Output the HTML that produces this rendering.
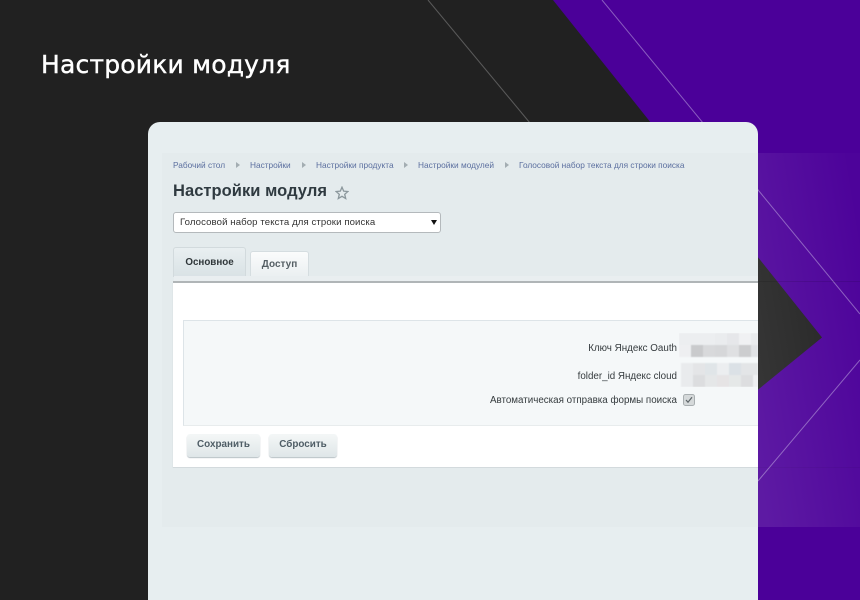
<!DOCTYPE html>
<html>
<head>
<meta charset="utf-8">
<style>
html,body{margin:0;padding:0}
body{width:860px;height:600px;overflow:hidden;position:relative;background:#212121;font-family:"Liberation Sans",sans-serif}
.a{position:absolute;white-space:nowrap}
.bc{font-size:8.3px;color:#5b6f9f;top:160px;line-height:11px}
.ar{position:absolute;top:162px;width:0;height:0;border-left:4px solid #a3adb2;border-top:3px solid transparent;border-bottom:3px solid transparent}
.lb{font-size:9.8px;color:#353b3e;right:183px;line-height:13px}
.btn{position:absolute;top:434px;height:23px;border-radius:3px;background:linear-gradient(#f4f7f7,#dfe6e8);box-shadow:0 1px 1px #b5bfc3;font-size:9.9px;font-weight:bold;color:#4f5d66;text-align:center;line-height:22px}
</style>
</head>
<body>
<svg class="a" style="left:0;top:0" width="860" height="600" viewBox="0 0 860 600">
  <polygon points="553,0 860,0 860,600 500,600 822,337.5" fill="#4b0099"/>
  <line x1="428" y1="0" x2="530" y2="123" stroke="#5a5a5a" stroke-width="1"/>
  <line x1="602" y1="0" x2="860" y2="314" stroke="#8a5cc0" stroke-width="1"/>
  <line x1="758" y1="481" x2="860" y2="360" stroke="#8a5cc0" stroke-width="1"/>
  <defs>
    <linearGradient id="g" x1="0" x2="1" y1=".8" y2=".2">
      <stop offset="0" stop-color="#fff" stop-opacity=".1"/>
      <stop offset="1" stop-color="#fff" stop-opacity=".012"/>
    </linearGradient>
  </defs>
  <rect x="758" y="153" width="102" height="374" fill="url(#g)"/>
  <rect x="758" y="281" width="102" height="1" fill="#000" opacity=".1"/>
  <rect x="758" y="467" width="102" height="1" fill="#000" opacity=".04"/>
</svg>

<div class="a" style="left:41px;top:49px;font-family:'DejaVu Sans',sans-serif;font-size:25px;font-weight:normal;color:#fff;line-height:32px;letter-spacing:.2px;-webkit-text-stroke:.4px #fff">Настройки модуля</div>

<div class="a" style="left:148px;top:122px;width:610px;height:478px;background:#e7eef0;border-radius:12px 12px 0 0;overflow:hidden">
  <div class="a" style="left:14px;top:31px;width:596px;height:374px;background:#e4ebed"></div>
</div>

<div class="a bc" style="left:173px">Рабочий стол</div><div class="ar" style="left:236px"></div>
<div class="a bc" style="left:250px">Настройки</div><div class="ar" style="left:302px"></div>
<div class="a bc" style="left:316px">Настройки продукта</div><div class="ar" style="left:404px"></div>
<div class="a bc" style="left:418px">Настройки модулей</div><div class="ar" style="left:505px"></div>
<div class="a bc" style="left:519px">Голосовой набор текста для строки поиска</div>

<div class="a" style="left:173px;top:181px;font-size:16.5px;font-weight:bold;color:#2f3a40;line-height:20px;letter-spacing:.05px">Настройки модуля</div>
<svg class="a" style="left:335px;top:186px" width="14" height="14" viewBox="0 0 14 14"><path d="M7 1.2 L8.7 5.1 L12.9 5.5 L9.7 8.3 L10.7 12.5 L7 10.3 L3.3 12.5 L4.3 8.3 L1.1 5.5 L5.3 5.1 Z" fill="none" stroke="#8b979c" stroke-width="1.3"/></svg>

<div class="a" style="left:173px;top:212px;width:266px;height:19px;background:#fff;border:1px solid #b4b9bc;border-radius:3px;font-size:9.6px;line-height:20px;color:#333;text-indent:6px;letter-spacing:.1px">Голосовой набор текста для строки поиска</div>
<div class="a" style="left:431px;top:220px;width:0;height:0;border-top:5px solid #111;border-left:3px solid transparent;border-right:3px solid transparent"></div>

<div class="a" style="left:173px;top:247px;width:71px;height:29px;background:linear-gradient(#e9eff1,#d9e2e5);border:1px solid #d2dadd;border-bottom:0;border-radius:3px 3px 0 0;font-size:9.8px;font-weight:bold;color:#2f3639;text-align:center;line-height:30px">Основное</div>
<div class="a" style="left:250px;top:251px;width:57px;height:25px;background:linear-gradient(#fbfcfc,#eaeff1);border:1px solid #d5dde0;border-bottom:0;border-radius:3px 3px 0 0;font-size:10px;font-weight:bold;color:#555f64;text-align:center;line-height:25px">Доступ</div>
<div class="a" style="left:174px;top:276px;width:584px;height:5px;background:#e9eef0"></div>
<div class="a" style="left:173px;top:281px;width:585px;height:2px;background:#b0b5b7"></div>

<div class="a" style="left:173px;top:283px;width:585px;height:184px;background:#fff;border-bottom:1px solid #d3dadd;box-shadow:-1px 0 0 #dfe6e8"></div>
<div class="a" style="left:183px;top:320px;width:574px;height:104px;background:#f5f8f9;border:1px solid #dde4e8;border-right:0;border-bottom-color:#e8eced"></div>

<div class="a lb" style="top:342px">Ключ Яндекс Oauth</div>
<div class="a lb" style="top:370px">folder_id Яндекс cloud</div>
<div class="a lb" style="top:394px">Автоматическая отправка формы поиска</div>

<svg class="a" style="left:679px;top:333px" width="79" height="54" viewBox="0 0 79 54">
  <g style="filter:blur(.6px)">
    <rect x="0" y="0" width="79" height="24" fill="#eceef0"/>
    <rect x="0" y="12" width="12" height="12" fill="#eeeff1"/>
    <rect x="12" y="12" width="12" height="12" fill="#c9cacc"/>
    <rect x="24" y="12" width="12" height="12" fill="#d8d9db"/>
    <rect x="36" y="12" width="12" height="12" fill="#d6d7d9"/>
    <rect x="48" y="12" width="12" height="12" fill="#dfe0e2"/>
    <rect x="60" y="12" width="12" height="12" fill="#cccdcf"/>
    <rect x="72" y="12" width="7" height="12" fill="#e0e2e5"/>
    <rect x="36" y="0" width="12" height="12" fill="#eaecee"/>
    <rect x="48" y="0" width="12" height="12" fill="#e6e7ea"/>
    <rect x="60" y="0" width="12" height="12" fill="#f0f1f3"/>
    <rect x="72" y="0" width="7" height="12" fill="#e9ebed"/>
    <rect x="2" y="30" width="77" height="24" fill="#e9ebed"/>
    <rect x="14" y="30" width="12" height="12" fill="#e4e5e7"/>
    <rect x="26" y="30" width="12" height="12" fill="#e0e5e8"/>
    <rect x="38" y="30" width="12" height="12" fill="#eceef0"/>
    <rect x="50" y="30" width="12" height="12" fill="#dbe1e6"/>
    <rect x="62" y="30" width="17" height="12" fill="#e3e5e7"/>
    <rect x="14" y="42" width="12" height="12" fill="#dcdddf"/>
    <rect x="26" y="42" width="12" height="12" fill="#e5e7e8"/>
    <rect x="38" y="42" width="12" height="12" fill="#e6e4e5"/>
    <rect x="50" y="42" width="12" height="12" fill="#e5e8e8"/>
    <rect x="62" y="42" width="12" height="12" fill="#dddee0"/>
    <rect x="74" y="42" width="5" height="12" fill="#eff0f2"/>
  </g>
</svg>

<svg class="a" style="left:683px;top:394px" width="12" height="12" viewBox="0 0 12 12">
  <rect x=".5" y=".5" width="11" height="11" rx="2" fill="#d5d9da" stroke="#a9afb1"/>
  <path d="M3 6 L5 8.2 L9 3.2" fill="none" stroke="#5d6568" stroke-width="1.2"/>
</svg>

<div class="btn" style="left:187px;width:73px">Сохранить</div>
<div class="btn" style="left:269px;width:68px">Сбросить</div>
</body>
</html>
